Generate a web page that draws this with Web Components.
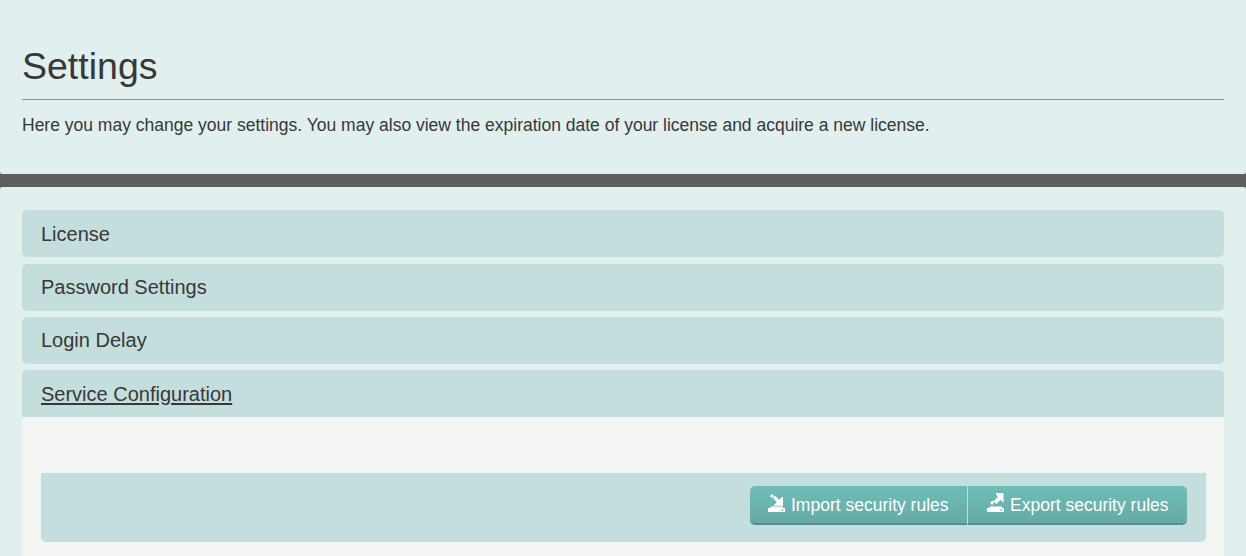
<!DOCTYPE html>
<html><head><meta charset="utf-8"><style>
html,body{margin:0;padding:0;height:556px;overflow:hidden;background:#e1efee;font-family:"Liberation Sans",Arial,sans-serif;color:#383838}
</style></head><body>
<settings-page></settings-page>
<script>
class SPanel extends HTMLElement{constructor(){super();this.attachShadow({mode:'open'}).innerHTML=`<style>
:host{display:block;background:#e1efee;box-sizing:border-box}
</style><slot></slot>`}}
class SHeader extends HTMLElement{constructor(){super();this.attachShadow({mode:'open'}).innerHTML=`<style>
:host{display:block;box-sizing:border-box;height:174px;padding:46px 22px 0;background:#e1efee;border-radius:0 0 2px 2px}
h1{margin:0;font:400 37.5px/41px "Liberation Sans",Arial,sans-serif;color:#383838;height:53px;border-bottom:1px solid #8a9a9a}
p{margin:0;padding-top:15px;font:400 17.5px/20px "Liberation Sans",Arial,sans-serif;color:#383838}
</style><h1><slot name="title"></slot></h1><p><slot></slot></p>`}}
class SAccordion extends HTMLElement{constructor(){super();this.attachShadow({mode:'open'}).innerHTML=`<style>
:host{display:block;box-sizing:border-box;margin-bottom:6.33px}
.h{display:flex;align-items:center;box-sizing:border-box;height:47px;padding:0 19px;background:#c3dedc;border-radius:5px;font:400 20px/24px "Liberation Sans",Arial,sans-serif;color:#383838}
:host([open]) .h{border-radius:5px 5px 0 0}
:host([open]) .t{text-decoration:underline;text-underline-offset:2px}
.b{display:none}
:host([open]) .b{display:block;background:#f3f5f4;padding:56px 18px 0 19px;height:139px;box-sizing:border-box}
</style><div class="h"><span class="t"><slot name="title"></slot></span></div><div class="b"><slot></slot></div>`}}
class SToolbar extends HTMLElement{constructor(){super();this.attachShadow({mode:'open'}).innerHTML=`<style>
:host{display:flex;justify-content:flex-end;box-sizing:border-box;height:69px;padding:13px 19px 0;background:#c3dedc;border-radius:0 0 5px 5px}
.g{display:flex;height:39px}
</style><div class="g"><slot></slot></div>`}}
class SButton extends HTMLElement{constructor(){super();const kind=this.getAttribute('icon');
const icon=kind==='import'
?'<path d="M2 3 L4 1 L6 3 L4 5 Z"/><path d="M5 5 L7.2 2.8 L11 6.8 L15 3.5 V12.8 H5.2 L8.8 9.2 Z"/>'
:'<path d="M8.6 0 H16.5 V10 L13.6 6.8 L9.4 11 L6.6 8.2 L10.8 4 Z"/><path d="M3 10 L5.5 7.6 L7.5 9.6 L5 12 Z"/>';
this.attachShadow({mode:'open'}).innerHTML=`<style>
:host{display:flex;align-items:center;gap:6px;box-sizing:border-box;height:39px;width:219px;padding:0 0 0 19px;color:#fff;font:400 17.5px/20px "Liberation Sans",Arial,sans-serif;background:linear-gradient(#6fbdb8,#66aaa5);border-bottom:2px solid #5a8d89}
:host([first]){width:218px;padding-left:18px;border-radius:5px 0 0 5px;border-right:1px solid #c3dedc}
:host([last]){border-radius:0 5px 5px 0}
svg{width:17px;height:19px;fill:#fff;flex:none;position:relative;top:-2px}
</style><svg viewBox="0 0 17 19">${icon}<path d="M2.5 13.5 H15 V15 H17 V19 H0 V15 H2.5 Z M13 16.6 v1 h2.5 v-1 z" fill-rule="evenodd"/></svg><span><slot></slot></span>`}}
class SettingsPage extends HTMLElement{constructor(){super();this.attachShadow({mode:'open'}).innerHTML=`<style>
:host{display:block;height:556px;overflow:hidden;background:#5f5f5f}
.main{padding:23.2px 22px 0;margin-top:13px;border-radius:2px 2px 0 0;height:369px;box-sizing:border-box}
</style>
<s-header><span slot="title">Settings</span>Here you may change your settings. You may also view the expiration date of your license and acquire a new license.</s-header>
<s-panel class="main">
<s-accordion><span slot="title">License</span></s-accordion>
<s-accordion><span slot="title">Password Settings</span></s-accordion>
<s-accordion><span slot="title">Login Delay</span></s-accordion>
<s-accordion open><span slot="title">Service Configuration</span>
<s-toolbar><s-button first icon="import">Import security rules</s-button><s-button last icon="export">Export security rules</s-button></s-toolbar>
</s-accordion>
</s-panel>`}}
customElements.define('s-panel',SPanel);
customElements.define('s-header',SHeader);
customElements.define('s-accordion',SAccordion);
customElements.define('s-toolbar',SToolbar);
customElements.define('s-button',SButton);
customElements.define('settings-page',SettingsPage);
</script>
</body></html>
